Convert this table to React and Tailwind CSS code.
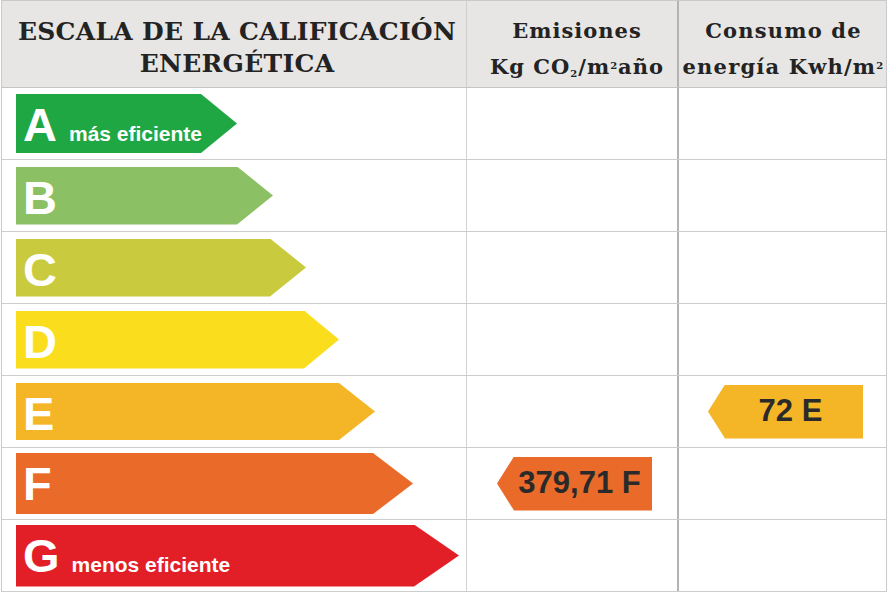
const bands = [
  { letter: 'A', label: 'más eficiente', color: 'bg-[#1fa744]', width: 'w-[221px]', height: 'h-[59px]', clip: '[clip-path:polygon(0_0,calc(100%-36px)_0,100%_50%,calc(100%-36px)_100%,0_100%)]' },
  { letter: 'B', color: 'bg-[#8cc064]', width: 'w-[257px]', height: 'h-[58px]', clip: '[clip-path:polygon(0_0,calc(100%-36px)_0,100%_50%,calc(100%-36px)_100%,0_100%)]' },
  { letter: 'C', color: 'bg-[#c9ca3d]', width: 'w-[290px]', height: 'h-[58px]', clip: '[clip-path:polygon(0_0,calc(100%-36px)_0,100%_50%,calc(100%-36px)_100%,0_100%)]' },
  { letter: 'D', color: 'bg-[#fade1e]', width: 'w-[323px]', height: 'h-[58px]', clip: '[clip-path:polygon(0_0,calc(100%-35px)_0,100%_50%,calc(100%-35px)_100%,0_100%)]' },
  { letter: 'E', color: 'bg-[#f4b526]', width: 'w-[359px]', height: 'h-[57px]', clip: '[clip-path:polygon(0_0,calc(100%-36px)_0,100%_50%,calc(100%-36px)_100%,0_100%)]' },
  { letter: 'F', color: 'bg-[#e96a29]', width: 'w-[397px]', height: 'h-[61px]', clip: '[clip-path:polygon(0_0,calc(100%-40px)_0,100%_50%,calc(100%-40px)_100%,0_100%)]' },
  { letter: 'G', label: 'menos eficiente', color: 'bg-[#e21e26]', width: 'w-[443px]', height: 'h-[62px]', clip: '[clip-path:polygon(0_0,calc(100%-45px)_0,100%_50%,calc(100%-45px)_100%,0_100%)]' },
];

// valores de la vivienda: emisiones en F, consumo en E
const emisiones = { F: { text: '379,71 F', color: 'bg-[#e96a29]' } };
const consumo = { E: { text: '72 E', color: 'bg-[#f4b526]' } };

const serif = "[font-family:'DejaVu_Serif',serif]";
const sans = '[font-family:Liberation_Sans,Arial,sans-serif]';

function Badge({ value, width }) {
  return (
    <div
      className={`${value.color} ${width} h-[54px] flex items-center justify-center pl-[10px] ${sans} font-bold text-[31px] text-[#2a2a2a] [clip-path:polygon(17px_0,100%_0,100%_100%,17px_100%,0_50%)]`}
    >
      {value.text}
    </div>
  );
}

export default function App() {
  return (
    <div className="w-[888px] h-[592px] bg-white">
      <div className="w-[886px] border-l border-t border-[#c9c9c9] ml-[1px]">
        {/* cabecera */}
        <div className="flex h-[87px] bg-[#e7e6e4] border-b border-[#c4c4c4]">
          <div className={`w-[465px] flex flex-col items-center justify-center border-r border-[#cfcfcf] ${serif} font-bold text-[#232323] text-[25px] tracking-[0.3px] leading-[32px] pt-[7px] pl-[6px] whitespace-nowrap`}>
            <span>ESCALA DE LA CALIFICACIÓN</span>
            <span>ENERGÉTICA</span>
          </div>
          <div className={`w-[212px] flex flex-col items-center justify-center border-r-2 border-[#b3b3b3] ${serif} font-bold text-[#232323] text-[21px] tracking-[1px] leading-[36px] pt-[10px] pl-[10px] whitespace-nowrap`}>
            <span>Emisiones</span>
            <span>
              Kg CO<sub className="text-[10px]">2</sub>/m<sup className="text-[10px]">2</sup>año
            </span>
          </div>
          <div className={`flex-1 flex flex-col items-center justify-center border-r border-[#c9c9c9] ${serif} font-bold text-[#232323] text-[21px] tracking-[1.2px] leading-[36px] pt-[10px] pl-[2px] whitespace-nowrap`}>
            <span>Consumo de</span>
            <span>
              energía Kwh/m<sup className="text-[10px]">2</sup>
            </span>
          </div>
        </div>

        {/* filas */}
        {bands.map((b) => (
          <div key={b.letter} className="flex h-[72px] border-b border-[#cdcdcd]">
            <div className="w-[465px] flex items-center pl-[14px] border-r border-[#d3d3d3]">
              <div className={`${b.color} ${b.width} ${b.height} ${b.clip} flex items-baseline pt-[4px] pl-[7px] ${sans} font-bold text-white`}>
                <span className="text-[47px] leading-[54px]">{b.letter}</span>
                {b.label && <span className="text-[21px] ml-[12px]">{b.label}</span>}
              </div>
            </div>
            <div className="w-[212px] flex items-center pl-[30px] border-r-2 border-[#b3b3b3]">
              {emisiones[b.letter] && <Badge value={emisiones[b.letter]} width="w-[155px]" />}
            </div>
            <div className="flex-1 flex items-center pl-[29px] border-r border-[#c9c9c9]">
              {consumo[b.letter] && <Badge value={consumo[b.letter]} width="w-[155px]" />}
            </div>
          </div>
        ))}
      </div>
    </div>
  );
}
